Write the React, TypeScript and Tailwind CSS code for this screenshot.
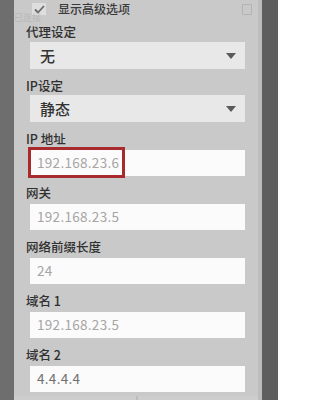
import React from "react";

const font = { fontFamily: '"Noto Sans CJK SC", "Noto Sans", sans-serif' };

function Label({ text }: { text: string }) {
  return (
    <div className="h-[28px] pl-[12px] pt-[9px] text-[12.5px] leading-[16px] font-medium text-[#303030]">{text}</div>
  );
}

function Field({ value, dark, boxed }: { value: string; dark?: boolean; boxed?: boolean }) {
  return (
    <div className="relative ml-[16px] mr-[13px] h-[26px] bg-[#fbfbfb] flex items-center pl-[7px]">
      <span className={`text-[13.5px] leading-none tracking-[0.3px] ${dark ? "text-[#707070]" : "text-[#a5a5a5]"}`}>{value}</span>
      {boxed && (
        <div className="absolute left-[-2px] top-[-3px] w-[97px] h-[31px] border-[3px] border-[#a82a2c]" />
      )}
    </div>
  );
}

function Spinner({ value }: { value: string }) {
  return (
    <div className="ml-[16px] mr-[13px] h-[27px] bg-[#e8e8e8] flex items-center justify-between pl-[10px] pr-[9px]">
      <span className="text-[15px] leading-none font-medium text-[#333]">{value}</span>
      <svg width="10" height="6" viewBox="0 0 10 6">
        <path d="M0 0 H10 L5 6 Z" fill="#5a5a5a" />
      </svg>
    </div>
  );
}

export default function App() {
  return (
    <div className="w-[278px] h-[400px] overflow-hidden flex bg-[#6c6c6c]" style={font}>
      <div className="w-[14px] shrink-0 bg-[#6e6e6e]" />
      <div className="relative w-[248px] shrink-0 bg-[#c9c9c9] border-r-[4px] border-[#bdbdbd] flex flex-col">
        <div className="absolute left-0 top-[13px] h-[10px] text-[9px] leading-[10px] text-[#b8b8b8]">已连接</div>
        <div className="absolute right-[6px] top-[4px] w-[10px] h-[11px] border border-[#b3b3b3] rounded-[1px]" />
        <div className="h-[16px] pt-[2px] flex items-center">
          <div className="ml-[18px] w-[14px] h-[12px] bg-[#dedede] flex items-center justify-center">
            <svg width="11" height="9" viewBox="0 0 11 9">
              <path d="M1 4.5 L4 7.5 L10 1" stroke="#6a6a6a" strokeWidth="1.8" fill="none" />
            </svg>
          </div>
          <span className="ml-[12px] text-[12px] leading-[14px] font-medium text-[#3a3a3a]">显示高级选项</span>
        </div>
        <div className="h-[26px] pl-[12px] pt-[8px] text-[12.5px] leading-[16px] font-medium text-[#303030]">代理设定</div>
        <Spinner value="无" />
        <div className="h-[26px] pl-[12px] pt-[9px] text-[12.5px] leading-[16px] font-medium text-[#303030]">IP设定</div>
        <Spinner value="静态" />
        <Label text="IP 地址" />
        <Field value="192.168.23.6" boxed />
        <Label text="网关" />
        <Field value="192.168.23.5" />
        <Label text="网络前缀长度" />
        <Field value="24" />
        <Label text="域名 1" />
        <Field value="192.168.23.5" />
        <Label text="域名 2" />
        <Field value="4.4.4.4" dark />
        <div className="mt-[4px] flex-1 bg-[#cdcdcd] flex">
          <div className="w-[124px] border-r-[2px] border-[#bcbcbc]" />
          <div className="flex-1" />
        </div>
      </div>
      <div className="flex-1 bg-[#5e5e5e]" />
    </div>
  );
}
